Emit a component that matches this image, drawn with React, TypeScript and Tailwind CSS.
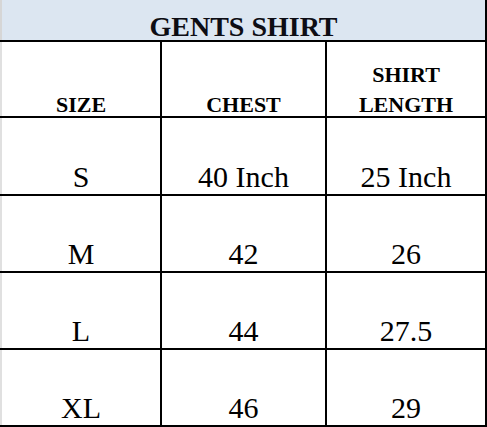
const rows = [
  ["S", "40 Inch", "25 Inch"],
  ["M", "42", "26"],
  ["L", "44", "27.5"],
  ["XL", "46", "29"],
];

export default function App() {
  return (
    <div
      className="w-[487px] h-[427px] bg-white"
      style={{ fontFamily: '"Liberation Serif", "Times New Roman", serif' }}
    >
      <div className="grid grid-cols-[160px_163px_158px] grid-rows-[40px_74px_76px_75px_75px_75px] gap-[2px] bg-black pr-[2px] pb-[2px] text-black">
        {/* title */}
        <div className="col-span-3 flex items-end justify-center bg-[#dce6f1] border-l-2 border-[#d6d6d6]">
          <span className="-mb-[1px] text-[28px] font-bold leading-none text-[#0d0d14]">GENTS SHIRT</span>
        </div>

        {/* column headers */}
        <div className="flex items-end justify-center bg-white border-l-2 border-[#e0e0e0]">
          <span className="-mb-1 text-[22px] font-bold leading-[30px]">SIZE</span>
        </div>
        <div className="flex items-end justify-center bg-white">
          <span className="-mb-1 text-[22px] font-bold leading-[30px]">CHEST</span>
        </div>
        <div className="flex items-end justify-center bg-white">
          <span className="-mb-1 text-center text-[22px] font-bold leading-[30px]">
            SHIRT
            <br />
            LENGTH
          </span>
        </div>

        {rows.map((r) =>
          r.map((v, i) => (
            <div
              key={r[0] + i}
              className={
                i === 0
                  ? "flex items-end justify-center bg-white border-l-2 border-[#e0e0e0] pb-[2px]"
                  : "flex items-end justify-center bg-white pb-[2px]"
              }
            >
              <span className="text-[30px] leading-none">{v}</span>
            </div>
          ))
        )}
      </div>
    </div>
  );
}
